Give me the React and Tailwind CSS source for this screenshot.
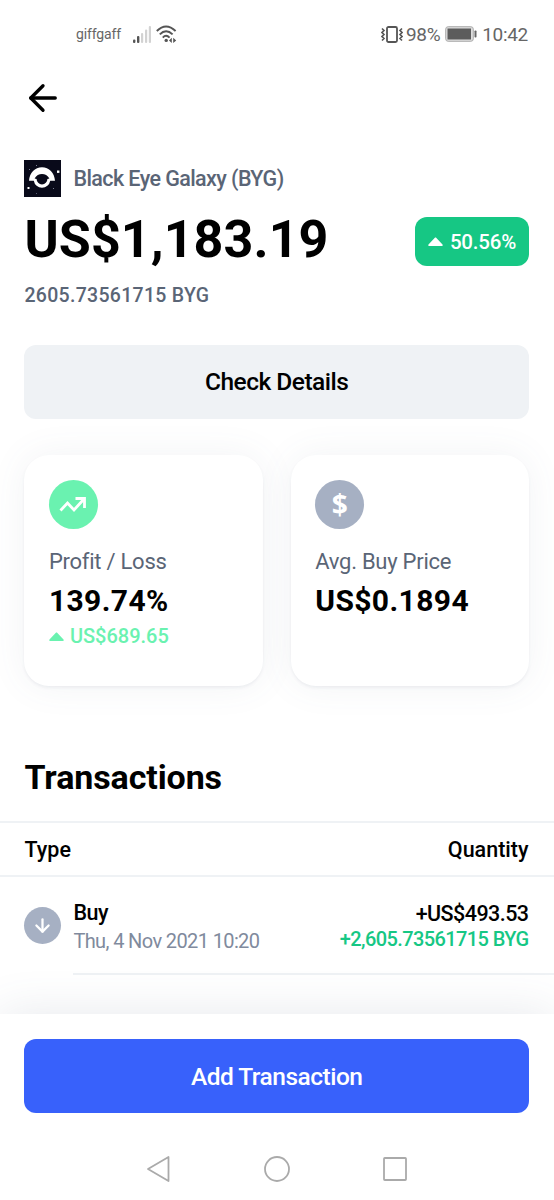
/* eslint-disable react/prop-types */
import { ArrowDown, ArrowLeft } from "lucide-react";

const transactions = [
  {
    id: 1,
    type: "Buy",
    date: "Thu, 4 Nov 2021 10:20",
    value: "+US$493.53",
    amount: "+2,605.73561715 BYG",
  },
];

const Caret = ({ className }) => (
  <svg viewBox="0 0 15 9" className={className} fill="currentColor">
    <path d="M1 9C0.2 9 0 8.2 0.5 7.6L6.6 0.9C7.1 0.3 7.9 0.3 8.4 0.9L14.5 7.6C15 8.2 14.8 9 14 9Z" />
  </svg>
);

const CoinLogo = () => (
  <svg viewBox="0 0 37 37" className="size-[37px]">
    <rect width="37" height="37" fill="#090a1a" />
    <path
      fill="#fff"
      d="M5 20.8C5.5 12.6 11 7.2 18 7.2S30.5 12.6 31 20.8H26.2A8.3 8.3 0 0 1 9.8 20.8Z"
    />
    <path
      fill="#090a1a"
      d="M10.6 18.4C12.4 15.4 15 14 18 14S23.6 15.4 25.4 18.4L23.4 19A5.3 5.3 0 0 1 12.6 19Z"
    />
    <rect x="33" y="10.5" width="2.4" height="2.4" fill="#fff" />
    <rect x="3.5" y="27" width="2" height="2" fill="#fff" />
    <rect x="5" y="9" width="1" height="1" fill="#777b90" />
    <rect x="12" y="5" width="1" height="1" fill="#777b90" />
    <rect x="29" y="28" width="1" height="1" fill="#777b90" />
    <rect x="12" y="33" width="1" height="1" fill="#555970" />
  </svg>
);

const StatusBar = () => (
  <div className="flex h-[68px] items-center justify-between pl-[76px] pr-[26px] text-[#666]">
    <div className="flex items-center">
      <span className="text-[14px] tracking-[-0.15px]">giffgaff</span>
      <svg viewBox="0 0 18 17" className="ml-3 h-[17px] w-[18px]">
        <rect x="0" y="13.5" width="2.4" height="3.5" rx="1" fill="#555" />
        <rect x="4" y="10" width="2.4" height="7" rx="1" fill="#555" />
        <rect x="8" y="7" width="2.2" height="10" rx="1" fill="#d2d2d2" />
        <rect x="12" y="3.5" width="2.2" height="13.5" rx="1" fill="#d2d2d2" />
        <rect x="15.8" y="0" width="2.2" height="17" rx="1" fill="#d2d2d2" />
      </svg>
      <svg
        viewBox="0 0 21 18"
        className="ml-[5px] h-[18px] w-[21px]"
        fill="none"
        stroke="#555"
        strokeWidth="1.9"
      >
        <path d="M0.8 6Q10 -3.2 19.6 6" />
        <path d="M3.8 9.4Q10 3 16.6 9.4" />
        <path d="M6.8 12.6Q10 9 13.6 12.6" />
        <circle cx="10.2" cy="15.4" r="1.7" fill="#555" stroke="none" />
        <path
          d="M13 15.4L15.8 12.8V18ZM20.2 15.4L17.2 12.8V18Z"
          fill="#555"
          stroke="none"
        />
      </svg>
    </div>
    <div className="flex items-center">
      <svg
        viewBox="0 0 22 17"
        className="h-[17px] w-[22px]"
        fill="none"
        stroke="#555"
      >
        <rect x="6" y="1" width="10" height="15" rx="1.5" strokeWidth="1.8" />
        <path
          d="M1 2.5L3 4.5L1 6.5L3 8.5L1 10.5L3 12.5L1 14.5M21 2.5L19 4.5L21 6.5L19 8.5L21 10.5L19 12.5L21 14.5"
          strokeWidth="1.6"
        />
      </svg>
      <span className="ml-[3px] pt-0.5 text-[19px] tracking-[-0.4px]">98%</span>
      <svg viewBox="0 0 32 16" className="ml-[5px] h-4 w-8">
        <rect
          x="0.7"
          y="0.7"
          width="27.6"
          height="14.6"
          rx="2.5"
          fill="#ddd"
          stroke="#aaa"
        />
        <rect x="2.5" y="2.5" width="23.5" height="11" fill="#5c5c5c" />
        <rect x="29.5" y="4.5" width="2" height="7" rx="0.8" fill="#666" />
      </svg>
      <span className="ml-[5px] pt-0.5 text-[19px] tracking-[-0.3px]">
        10:42
      </span>
    </div>
  </div>
);

const StatCard = ({ icon, label, value, children }) => (
  <div className="h-[231px] flex-1 rounded-[25px] bg-white px-[24.5px] pt-[25px] shadow-[0_2px_3px_rgba(88,102,126,0.08),0_0_36px_rgba(88,102,126,0.08)]">
    {icon}
    <p className="mt-[19px] text-[22px] leading-7 tracking-[-0.25px] text-[#5a6576]">
      {label}
    </p>
    <p className="mt-[7px] text-[30px] leading-9 font-bold tracking-[0.4px] text-black">
      {value}
    </p>
    {children}
  </div>
);

const TransactionRow = ({ transaction }) => (
  <div className="flex h-[98px] pl-[24.4px]">
    <div className="mt-[30px] flex size-[37px] shrink-0 items-center justify-center rounded-full bg-[#a6b0c3]">
      <ArrowDown size={21} strokeWidth={2.6} className="text-white" />
    </div>
    <div className="ml-3 flex flex-1 justify-between border-b-2 border-[#eff2f5] pr-[25.5px]">
      <div className="pt-[22px]">
        <p className="text-[21.5px] leading-7 font-medium tracking-[-0.5px] text-black">
          {transaction.type}
        </p>
        <p className="text-[20px] leading-7 tracking-[-0.62px] text-[#808a9d]">
          {transaction.date}
        </p>
      </div>
      <div className="pt-6 text-right font-medium">
        <p className="text-[21.5px] leading-[26px] tracking-[-0.55px] text-black">
          {transaction.value}
        </p>
        <p className="text-[20px] leading-[25px] tracking-[-0.6px] text-[#16c784]">
          {transaction.amount}
        </p>
      </div>
    </div>
  </div>
);

const App = () => {
  return (
    <div className="flex h-[1200px] w-[554px] flex-col overflow-hidden bg-white font-[Roboto,sans-serif]">
      <StatusBar />

      <main className="flex-1">
        <div className="flex h-[61px] items-center px-[22px] pb-px">
          <ArrowLeft size={42} strokeWidth={1.9} className="text-black" />
        </div>

        <section className="pt-[31px] pr-[25px] pl-[24.4px]">
          <div className="flex items-center gap-3">
            <CoinLogo />
            <span className="pt-px text-[21.5px] font-medium tracking-[-0.58px] text-[#5a6576]">
              Black Eye Galaxy (BYG)
            </span>
          </div>
          <div className="mt-[11px] flex items-center justify-between">
            <h1 className="text-[52px] leading-[64px] font-bold tracking-[0.1px] text-black">
              US$1,183.19
            </h1>
            <div className="mt-0.5 flex h-[49px] w-[114px] items-center justify-center gap-[7px] rounded-xl bg-[#16c784] text-white">
              <Caret className="h-[9px] w-[15px]" />
              <span className="pt-0.5 text-[20.5px] font-medium tracking-[-0.2px]">
                50.56%
              </span>
            </div>
          </div>
          <p className="mt-[10px] text-[19.5px] leading-7 font-medium tracking-[0.3px] text-[#5a6576]">
            2605.73561715 BYG
          </p>
          <button className="mt-[35px] h-[74px] w-full rounded-xl bg-[#eff2f5] pt-px text-[24.5px] font-medium tracking-[-0.5px] text-black">
            Check Details
          </button>

          <div className="mt-[36px] flex gap-7">
            <StatCard
              label="Profit / Loss"
              value="139.74%"
              icon={
                <div className="flex size-[49px] items-center justify-center rounded-full bg-[#6af2b0]">
                  <svg
                    viewBox="0 0 28 18"
                    className="h-[18px] w-7"
                    fill="none"
                    stroke="#fff"
                    strokeWidth="2.8"
                  >
                    <path d="M1.5 14.5L8.5 7L15 14L25 3" />
                    <path d="M16.5 2.5H25.5V12" />
                  </svg>
                </div>
              }
            >
              <p className="mt-[3px] flex items-center gap-[6px] text-[20px] leading-7 font-medium text-[#6af2b0]">
                <Caret className="h-[9px] w-[15px]" />
                US$689.65
              </p>
            </StatCard>
            <StatCard
              label="Avg. Buy Price"
              value="US$0.1894"
              icon={
                <div className="flex size-[49px] items-center justify-center rounded-full bg-[#a6b0c3] pb-0.5 font-['Open_Sans',sans-serif] text-[28px] font-bold text-white">
                  $
                </div>
              }
            />
          </div>
        </section>

        <h2 className="mt-[70px] px-[24.5px] text-[34px] leading-[42px] font-bold tracking-[-0.1px] text-black">
          Transactions
        </h2>
        <div className="mt-[23px] flex h-[56px] items-center justify-between border-y-2 border-[#eff2f5] pt-0.5 pr-[25.5px] pl-[24.5px] text-[21.5px] font-medium text-black">
          <span>Type</span>
          <span>Quantity</span>
        </div>
        {transactions.map((transaction) => (
          <TransactionRow key={transaction.id} transaction={transaction} />
        ))}
      </main>

      <footer className="h-[186px] bg-white pt-[25px] pr-[25px] pl-[24.4px] shadow-[0_0_44px_rgba(88,102,126,0.14)]">
        <button className="h-[74px] w-full rounded-xl bg-[#3861fb] pt-0.5 text-[24.5px] font-medium tracking-[-0.5px] text-white">
          Add Transaction
        </button>
        <div className="mt-[42px] flex items-center justify-center gap-[90px]">
          <svg
            viewBox="0 0 28 28"
            className="size-7"
            fill="none"
            stroke="#aaa"
            strokeWidth="1.8"
            strokeLinejoin="round"
          >
            <path d="M3 14L23.5 2V26Z" />
          </svg>
          <svg
            viewBox="0 0 28 28"
            className="size-7"
            fill="none"
            stroke="#aaa"
            strokeWidth="1.8"
          >
            <circle cx="14" cy="14" r="12" />
          </svg>
          <svg
            viewBox="0 0 28 28"
            className="size-7"
            fill="none"
            stroke="#aaa"
            strokeWidth="1.8"
          >
            <rect x="3" y="3" width="22" height="22" rx="0.8" />
          </svg>
        </div>
      </footer>
    </div>
  );
};

export default App;
